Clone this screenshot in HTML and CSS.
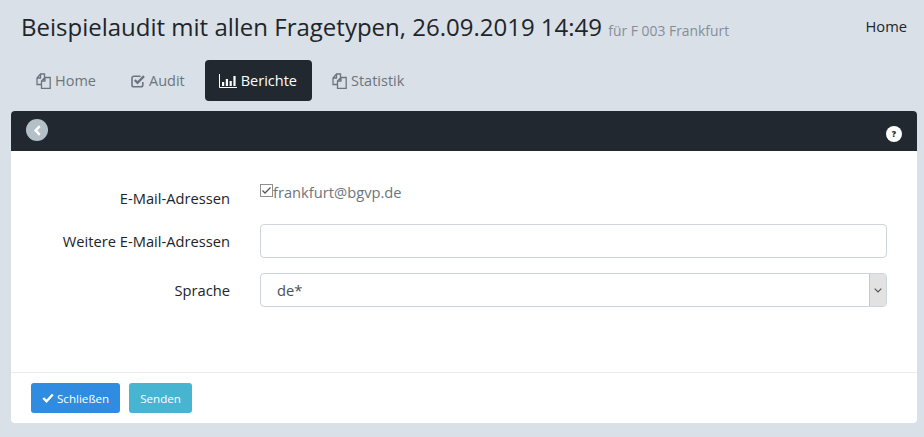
FILE: index.html
```html
<!DOCTYPE html>
<html lang="de">
<head>
<meta charset="utf-8">
<title>Beispielaudit</title>
<link rel="stylesheet" href="styles.css">
</head>
<body>
<header class="top">
  <h1 class="title">Beispielaudit mit allen Fragetypen, 26.09.2019 14:49 <small class="sub">für F 003 Frankfurt</small></h1>
  <a class="home-link">Home</a>
</header>
<nav class="tabs">
  <a class="tab">
    <svg class="ico ico-files" viewBox="0 0 15 16"><path d="M5.500 11.500H1V5L4.500 1H8.500V4.500M4.500 1V5H1M5.500 15.300V8L9 4.500H14.200V15.300Z M9 4.500V8H5.500" fill="none" stroke="currentColor" stroke-width="1.300"/></svg>
    Home</a>
  <a class="tab">
    <svg class="ico ico-check" viewBox="0 0 14 14"><path d="M11.800 8V11A1.800 1.800 0 0 1 10 12.800H2.800A1.800 1.800 0 0 1 1 11V4A1.800 1.800 0 0 1 2.800 2.200H9.500" fill="none" stroke="currentColor" stroke-width="1.600"/><path d="M3.800 6L6.500 8.800L13 2.200" fill="none" stroke="currentColor" stroke-width="2.400"/></svg>
    Audit</a>
  <a class="tab tab-active">
    <svg class="ico ico-chart" viewBox="0 0 18 16"><path d="M0.500 1V14.500H18" fill="none" stroke="currentColor"/><path d="M3 9h2.200v4H3zM6.800 6h2.200v7H6.800zM10.600 8h2.200v5h-2.200zM14.400 3h2.200v10h-2.200z" fill="currentColor"/></svg>
    Berichte</a>
  <a class="tab">
    <svg class="ico ico-files" viewBox="0 0 15 16"><path d="M5.500 11.500H1V5L4.500 1H8.500V4.500M4.500 1V5H1M5.500 15.300V8L9 4.500H14.200V15.300Z M9 4.500V8H5.500" fill="none" stroke="currentColor" stroke-width="1.300"/></svg>
    Statistik</a>
</nav>
<main class="panel">
  <div class="panel-head">
    <span class="back"><svg viewBox="0 0 10 12" class="back-ico"><path d="M7.500 1.200L3 6L7.500 10.800" fill="none" stroke="currentColor" stroke-width="2.800"/></svg></span>
    <span class="help">?</span>
  </div>
  <div class="panel-body">
    <div class="row row-check">
      <label class="lbl">E-Mail-Adressen</label>
      <div class="val check-val">
        <svg class="cb" viewBox="0 0 13 13"><rect x="0.500" y="0.500" width="12" height="12" fill="#fff" stroke="#8f8f8f"/><path d="M2.500 6.500L5 9L10.500 3.500" fill="none" stroke="#555" stroke-width="1.300"/></svg>
        <span>frankfurt@bgvp.de</span>
      </div>
    </div>
    <div class="row">
      <label class="lbl">Weitere E-Mail-Adressen</label>
      <div class="val"><input class="ctl" type="text"></div>
    </div>
    <div class="row">
      <label class="lbl">Sprache</label>
      <div class="val">
        <div class="ctl sel"><span class="sel-text">de*</span><span class="sel-btn"><svg viewBox="0 0 8 5" class="caret"><path d="M0.700 0.700L4 4L7.300 0.700" fill="none" stroke="#555" stroke-width="1.200"/></svg></span></div>
      </div>
    </div>
  </div>
  <div class="panel-foot">
    <button class="btn btn-blue"><svg viewBox="0 0 12 10" class="btn-ico"><path d="M1.200 5L4.500 8.200L10.800 1.500" fill="none" stroke="currentColor" stroke-width="2.400"/></svg>Schließen</button>
    <button class="btn btn-cyan">Senden</button>
  </div>
</main>
</body>
</html>
```
FILE: styles.css
```css
* { box-sizing: border-box; }
html, body { margin: 0; height: 100%; }
body {
  background: #d9e0e8;
  font-family: "Open Sans", sans-serif;
  font-size: 14.7px;
  color: #212529;
  padding: 0 7px 14px 11px;
  overflow: hidden;
}
.top {
  display: flex;
  justify-content: space-between;
  align-items: flex-start;
  padding: 10px 10px 0 10px;
  height: 60px;
}
.title { margin: 0; font-size: 24px; font-weight: 400; line-height: 33px; white-space: nowrap; }
.sub { font-size: 13.900px; color: #868e96; }
.home-link { line-height: 30px; margin-top: 1px; }
.tabs { display: flex; height: 41px; margin-bottom: 10px; padding-left: 10px; gap: 5px; }
.tab {
  display: flex;
  align-items: center;
  gap: 4px;
  padding: 0 15px;
  border-radius: 4px;
  color: #6c757d;
  font-size: 14.500px;
}
.tab-active { background: #22282f; color: #fff; padding-left: 14px; }
.ico { height: 16px; flex: none; }
.ico-files { width: 15px; }
.ico-check { width: 14px; }
.ico-chart { width: 18px; }
.panel {
  height: 312px;
  border-radius: 4px;
  background: #fff;
  display: flex;
  flex-direction: column;
  overflow: hidden;
}
.panel-head {
  height: 40px;
  flex: none;
  background: #22282f;
  display: flex;
  justify-content: space-between;
  padding: 8px 15px 0 15px;
}
.back {
  width: 22px; height: 22px; border-radius: 50%;
  background: #b4c0c8; color: #fff;
  display: flex; align-items: center; justify-content: center;
}
.back-ico { width: 9px; height: 11px; }
.help {
  width: 16px; height: 16px; border-radius: 50%;
  background: #fff; color: #22282f;
  font-size: 8.500px; font-weight: 800; line-height: 16px; text-align: center;
  margin-top: 7px;
}
.panel-body { flex: 1; padding: 30px 30px 0 0; display: flex; flex-direction: column; gap: 15px; }
.row { display: flex; align-items: center; height: 34px; }
.row-check { align-items: flex-start; height: 28px; margin-top: 0; }
.lbl { width: 219px; text-align: right; margin-right: 30px; flex: none; }
.row-check .lbl { padding-top: 7px; }
.val { flex: 1; }
.check-val { display: flex; align-items: center; color: #6c757d; line-height: 22px; }
.cb { width: 13px; height: 13px; flex: none; margin-top: -3px; }
.ctl {
  display: block;
  width: 100%;
  height: 34px;
  border: 1px solid #ced4da;
  border-radius: 4px;
  background: #fff;
}
.sel { display: flex; justify-content: space-between; align-items: stretch; color: #495057; }
.sel-text { padding: 0 16px; line-height: 33px; }
.sel-btn {
  width: 17px; background: #e2e2e2; border-left: 1px solid #c8c8c8;
  display: flex; align-items: center; justify-content: center;
  border-radius: 0 3px 3px 0;
}
.caret { width: 8px; height: 5px; }
.panel-foot {
  height: 51px;
  flex: none;
  border-top: 1px solid #e9ecef;
  padding: 10px 20px;
  display: flex;
  gap: 9px;
}
.btn {
  height: 30px;
  border: 0;
  border-radius: 3px;
  color: #fff;
  font-family: inherit;
  font-size: 11.600px;
  padding: 0 11px;
  display: flex;
  align-items: center;
}
.btn-blue { background: #2f8ce0; }
.btn-cyan { background: #47b4d2; }
.btn-ico { width: 12px; height: 10px; margin-right: 3px; }
```
